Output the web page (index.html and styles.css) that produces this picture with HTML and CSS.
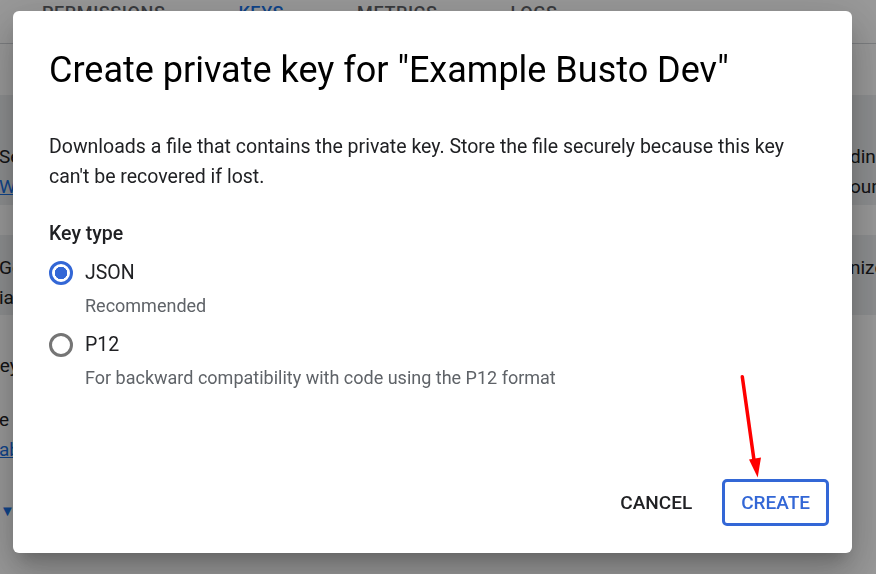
FILE: index.html
```html
<!DOCTYPE html>
<html lang="en">
<head>
  <meta charset="UTF-8" />
  <meta name="viewport" content="width=device-width, initial-scale=1.0"/>
  <title>Create private key</title>
  <link rel="stylesheet" href="styles.css">
</head>

<body>
  <!-- Page behind the dialog -->
  <div class="page">
    <nav class="tabs">
      <span class="tab">Permissions</span>
      <span class="tab active">Keys</span>
      <span class="tab">Metrics</span>
      <span class="tab">Logs</span>
    </nav>

    <div class="notice first">
      <div class="line"><span>Service account keys could pose a security risk if compromised.</span><span>dings</span></div>
      <div class="line"><span><a href="#">Workload Identity Federation</a> lets you avoid keys.</span><span>ounts</span></div>
    </div>

    <div class="notice second">
      <div class="line"><span>Google automatically disables service account keys detected in public repositories.</span><span>nized</span></div>
      <div class="line"><span>ias and organization policies can restrict key creation.</span><span></span></div>
    </div>

    <div class="section">
      <div class="line out"><span>Keys</span><span></span></div>
      <div class="line gap"><span>e</span><span></span></div>
      <div class="line"><span><a href="#">able service account key creation</a></span><span></span></div>
      <div class="line gap"><span class="caret">&#9660;</span><span></span></div>
    </div>
  </div>

  <div class="overlay"></div>

  <!-- Dialog -->
  <div class="dialog">
    <h1 class="dialog-title">Create private key for "Example Busto Dev"</h1>
    <p class="dialog-text">Downloads a file that contains the private key. Store the file securely because this key can't be recovered if lost.</p>

    <div class="field-label">Key type</div>

    <div class="options">
      <label class="option">
        <span class="radio checked"></span>
        <span class="option-name">JSON</span>
        <span class="option-hint">Recommended</span>
      </label>
      <label class="option">
        <span class="radio"></span>
        <span class="option-name">P12</span>
        <span class="option-hint">For backward compatibility with code using the P12 format</span>
      </label>
    </div>

    <div class="actions">
      <button class="btn">Cancel</button>
      <button class="btn primary">Create</button>
    </div>
  </div>

  <!-- annotation arrow -->
  <svg class="arrow" width="40" height="112" viewBox="0 0 40 112">
    <line x1="7.3" y1="6.7" x2="19" y2="90" stroke="#ff0000" stroke-width="3.5" stroke-linecap="round" />
    <polygon points="14,89.5 26,87.5 22.7,107.5" fill="#ff0000" />
  </svg>
</body>
</html>
```

FILE: styles.css
```css
:root {
  --blue: #3367d6;
  --text: #202124;
  --muted: #5f6368;
  --link: #1a73e8;
}

body {
  font-family: Roboto, 'Noto Sans', sans-serif;
  margin: 0;
  padding: 0;
  height: 574px;
  overflow: hidden;
  background: #fff;
  color: var(--text);
}

/* page behind the dialog */
.page {
  font-size: 19px;
  line-height: 30px;
}

.tabs {
  display: flex;
  gap: 73px;
  height: 43px;
  padding-left: 42px;
  border-bottom: 1px solid #cfd2d6;
}

.tab {
  font-size: 18px;
  font-weight: 500;
  line-height: 26px;
  letter-spacing: 0.6px;
  text-transform: uppercase;
  color: var(--muted);
}

.tab.active { color: var(--link); }

.notice {
  background-color: #eceef0;
}

.notice.first {
  margin-top: 51px;
  padding: 47px 0 3px;
}

.notice.second {
  margin-top: 30px;
  padding: 18px 0 2px;
}

.section {
  margin-top: 36px;
}

.line {
  display: grid;
  grid-template-columns: 850px 1fr;
  white-space: nowrap;
  overflow: hidden;
}

.line > span:first-child {
  overflow: hidden;
  margin-left: -1px;
}

.line.out > span:first-child { margin-left: -12px; }
.line.gap { margin-top: 24px; }

.line a {
  color: var(--link);
  text-decoration: underline;
}

.caret {
  color: var(--link);
  font-size: 15px;
  line-height: 44px;
  padding-left: 1px;
}

.overlay {
  position: fixed;
  inset: 0;
  background-color: rgba(0, 0, 0, 0.4);
}

/* dialog */
.dialog {
  position: fixed;
  left: 13px;
  top: 11px;
  width: 839px;
  height: 542px;
  box-sizing: border-box;
  padding: 39px 36px 27px;
  display: flex;
  flex-direction: column;
  background-color: #fff;
  border-radius: 6px;
  box-shadow: 0 11px 15px -7px rgba(0, 0, 0, 0.2), 0 24px 38px 3px rgba(0, 0, 0, 0.14), 0 9px 46px 8px rgba(0, 0, 0, 0.12);
}

.dialog-title {
  margin: 0;
  font-size: 36px;
  font-weight: 400;
  line-height: 40px;
  color: #000;
}

.dialog-text {
  margin: 42px 0 0;
  font-size: 19.5px;
  line-height: 30px;
}

.field-label {
  margin-top: 27px;
  font-size: 19.5px;
  font-weight: 500;
  line-height: 30px;
}

.options {
  display: flex;
  flex-direction: column;
  gap: 9px;
  margin-top: 9px;
}

.option {
  display: grid;
  grid-template-columns: 36px 1fr;
  grid-template-rows: 30px 30px;
  row-gap: 3px;
  align-items: center;
}

.radio {
  width: 24px;
  height: 24px;
  box-sizing: border-box;
  border: 3px solid #757575;
  border-radius: 50%;
}

.radio.checked {
  border-color: var(--blue);
  background: radial-gradient(circle, var(--blue) 0 6px, transparent 6.5px);
}

.option-name {
  font-size: 19.5px;
  line-height: 30px;
}

.option-hint {
  grid-column: 2;
  font-size: 18px;
  line-height: 30px;
  color: var(--muted);
}

.actions {
  margin-top: auto;
  margin-right: -13px;
  display: flex;
  justify-content: flex-end;
  gap: 11px;
}

.btn {
  height: 47px;
  padding: 0 16px;
  border: 3px solid transparent;
  border-radius: 5px;
  background: none;
  font-family: Roboto, sans-serif;
  font-size: 19px;
  font-weight: 500;
  text-transform: uppercase;
  color: var(--text);
  cursor: pointer;
}

.btn.primary {
  border-color: var(--blue);
  color: var(--blue);
}

.arrow {
  position: fixed;
  left: 735px;
  top: 370px;
}
```
